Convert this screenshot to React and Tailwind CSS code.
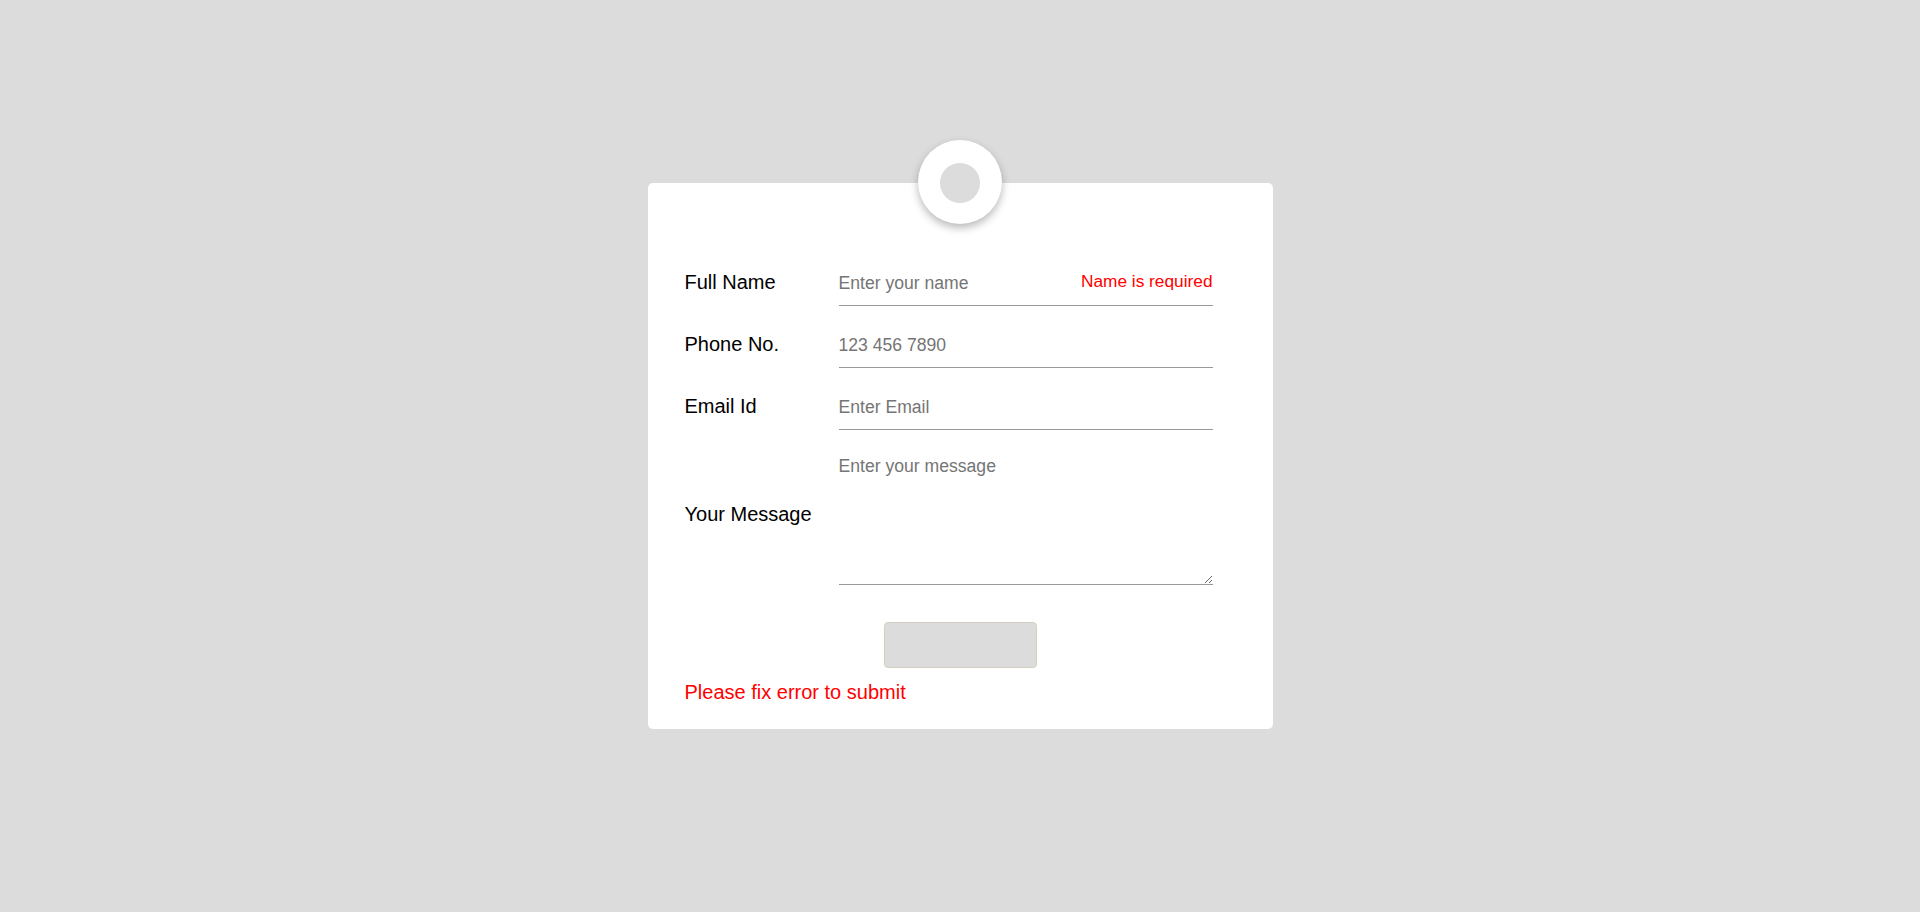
export default function App() {
  const font = { fontFamily: '"Liberation Sans", Arial, sans-serif' };
  return (
    <div className="min-h-screen w-full bg-[#dcdcdc] flex items-center justify-center" style={font}>
      <form
        className="relative w-[625px] bg-white rounded-[5px] pt-[79px] pl-[37px] pr-[60px] pb-[25px]"
        onSubmit={(e) => e.preventDefault()}
      >
        <div className="absolute left-1/2 top-[-43px] -translate-x-1/2 w-[84px] h-[84px] rounded-full bg-white shadow-[0_4px_8px_rgba(0,0,0,0.28)] flex items-center justify-center">
          <div className="w-10 h-10 mt-[2px] rounded-full bg-[#dcdcdc]" />
        </div>

        <div className="flex items-center mb-[18px]">
          <label className="w-[154px] mb-[4px] text-[20px] leading-[23px] text-black">Full Name</label>
          <div className="relative flex-1">
            <input
              type="text"
              placeholder="Enter your name"
              className="w-full h-[44px] px-0 border-0 border-b border-[#999] outline-none text-[17.6px] text-black placeholder:text-[#757575] bg-transparent"
            />
            <span className="absolute right-0 top-[9px] text-[17.3px] leading-[20px] text-[#ff0000]">Name is required</span>
          </div>
        </div>

        <div className="flex items-center mb-[18px]">
          <label className="w-[154px] mb-[4px] text-[20px] leading-[23px] text-black">Phone No.</label>
          <input
            type="text"
            placeholder="123 456 7890"
            className="flex-1 h-[44px] px-0 border-0 border-b border-[#999] outline-none text-[17.6px] text-black placeholder:text-[#757575] bg-transparent"
          />
        </div>

        <div className="flex items-center mb-[18px]">
          <label className="w-[154px] mb-[4px] text-[20px] leading-[23px] text-black">Email Id</label>
          <input
            type="text"
            placeholder="Enter Email"
            className="flex-1 h-[44px] px-0 border-0 border-b border-[#999] outline-none text-[17.6px] text-black placeholder:text-[#757575] bg-transparent"
          />
        </div>

        <div className="flex items-center">
          <label className="w-[154px] mb-[4px] text-[20px] leading-[23px] text-black">Your Message</label>
          <textarea
            placeholder="Enter your message"
            className="flex-1 h-[137px] px-0 pt-[8px] pb-0 border-0 border-b border-[#999] outline-none text-[17.6px] leading-[20px] text-black placeholder:text-[#757575] bg-transparent resize-y"
          />
        </div>

        <div className="flex justify-center mt-[37px] ml-[23px]">
          <button
            type="submit"
            disabled
            className="w-[153px] h-[46px] rounded-[4px] bg-[#dcdcdc] border border-[#d4d0bd]"
          />
        </div>

        <p className="mt-[13px] text-[20px] leading-[23px] text-[#ff0000]">Please fix error to submit</p>
      </form>
    </div>
  );
}
